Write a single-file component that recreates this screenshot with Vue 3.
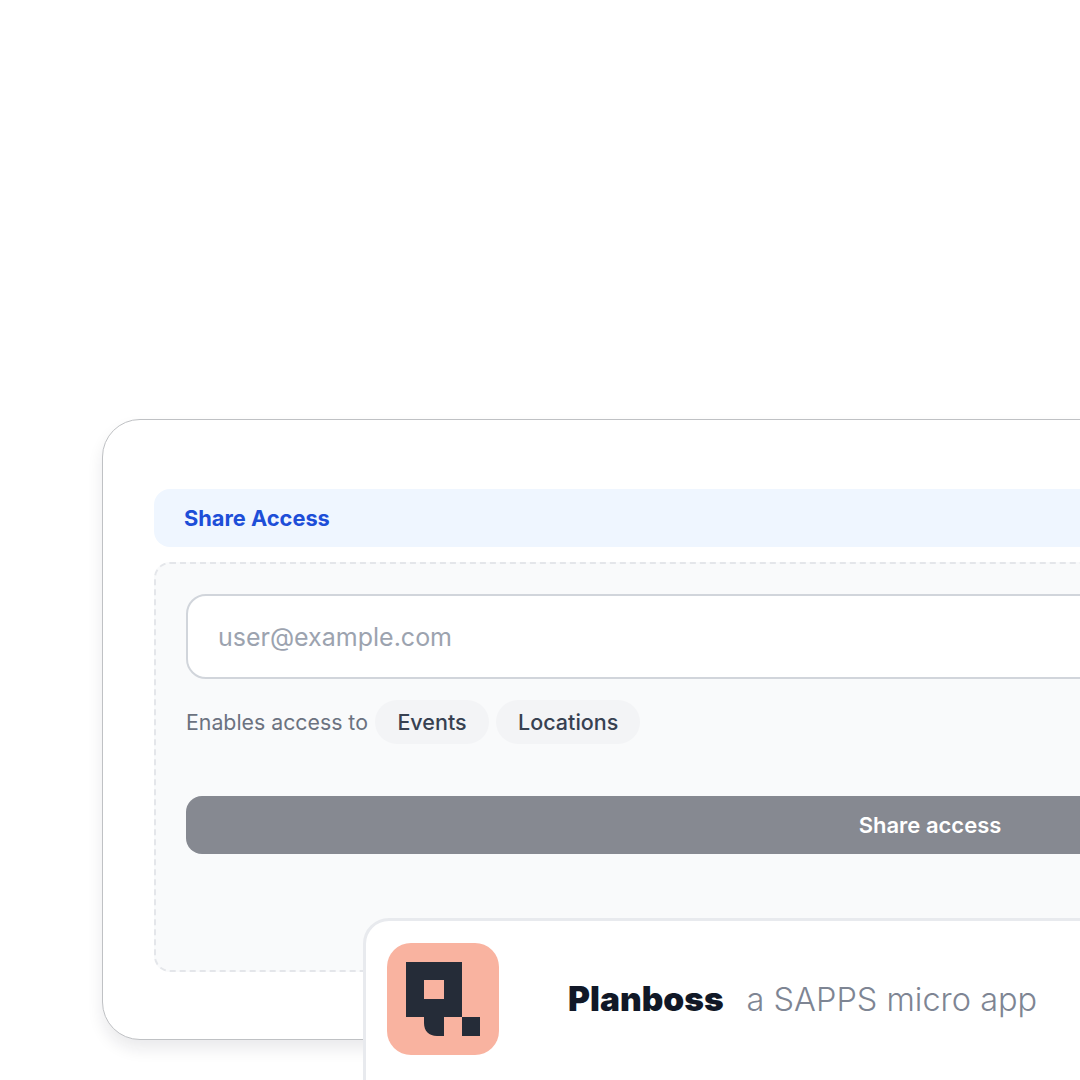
<template>
  <main class="page">
    <section class="card">
      <header class="cardHead">Share Access</header>

      <div class="shareBox">
        <input class="emailInput" type="text" placeholder="user@example.com" />

        <div class="accessRow">
          <span class="accessLabel">Enables access to</span>
          <span v-for="item in scopes" :key="item" class="chip">{{ item }}</span>
        </div>

        <button class="shareBtn" type="button">Share access</button>
      </div>
    </section>

    <aside class="appCard">
      <svg class="appLogo" viewBox="0 0 112 112" aria-hidden="true">
        <rect width="112" height="112" rx="24" fill="#f9b3a0" />
        <path
          fill="#252c38"
          fill-rule="evenodd"
          d="M19 19H75V74H57V93H50C42 93 37 88 37 80V74H19ZM37 37V56H57V37Z"
        />
        <rect x="75" y="74" width="18" height="19" fill="#252c38" />
      </svg>
      <p class="appText">
        <strong class="appName">Planboss</strong>
        <span class="appTag">a SAPPS micro app</span>
      </p>
    </aside>
  </main>
</template>

<script setup>
const scopes = ["Events", "Locations"];
</script>

<style>
html,
body {
  margin: 0;
  background: #fff;
}
</style>

<style scoped>
.page {
  position: relative;
  width: 1080px;
  height: 1080px;
  overflow: hidden;
  background: #fff;
  font-family: Inter, "Liberation Sans", sans-serif;
  padding: 419px 0 0 102px;
  box-sizing: border-box;
}

.card {
  box-sizing: border-box;
  width: 1656px;
  height: 621px;
  padding: 69px 51px 0;
  background: #fff;
  border: 1px solid #bfc1c4;
  border-radius: 38px;
  box-shadow: 0 9px 16px rgba(17, 24, 39, 0.09);
}

.cardHead {
  box-sizing: border-box;
  height: 58px;
  margin-bottom: 15px;
  padding-left: 30px;
  display: flex;
  align-items: center;
  background: #eff6ff;
  border-radius: 16px;
  color: #1d4ed8;
  font-size: 21.8px;
  font-weight: 700;
}

.shareBox {
  box-sizing: border-box;
  height: 410px;
  padding: 30px;
  display: flex;
  flex-direction: column;
  background: #f9fafb;
  border: 2px dashed #e4e6ea;
  border-radius: 16px;
}

.emailInput {
  box-sizing: border-box;
  flex: none;
  width: 100%;
  height: 85px;
  padding: 0 30px;
  background: #fff;
  border: 2px solid #d1d5db;
  border-radius: 20px;
  outline: none;
  font-family: inherit;
  font-size: 25px;
}

.emailInput::placeholder {
  color: #9ca3af;
  opacity: 1;
}

.accessRow {
  display: flex;
  align-items: center;
  gap: 7.5px;
  margin-top: 21px;
}

.accessLabel {
  color: #6b7280;
  font-size: 21.3px;
}

.chip {
  height: 44px;
  padding: 0 22px;
  display: flex;
  align-items: center;
  background: #f3f4f6;
  border-radius: 22px;
  color: #374151;
  font-size: 21.5px;
  font-weight: 500;
}

.shareBtn {
  flex: none;
  height: 58px;
  margin-top: 52px;
  background: #868991;
  border: 0;
  border-radius: 16px;
  color: #fff;
  font-family: inherit;
  font-size: 22px;
  font-weight: 600;
}

.appCard {
  position: absolute;
  left: 363px;
  top: 918px;
  box-sizing: border-box;
  width: 1000px;
  height: 300px;
  padding: 22px 0 0 21px;
  display: flex;
  background: #fff;
  border: 3px solid #e8eaee;
  border-radius: 26px;
}

.appLogo {
  flex: none;
  width: 112px;
  height: 112px;
}

.appText {
  margin: 0 0 0 69px;
  height: 112px;
  display: flex;
  align-items: center;
  gap: 23px;
}

.appName {
  color: #111827;
  font-size: 33.5px;
  font-weight: 900;
}

.appTag {
  color: #7e8593;
  font-size: 32.5px;
  font-weight: 300;
}
</style>
